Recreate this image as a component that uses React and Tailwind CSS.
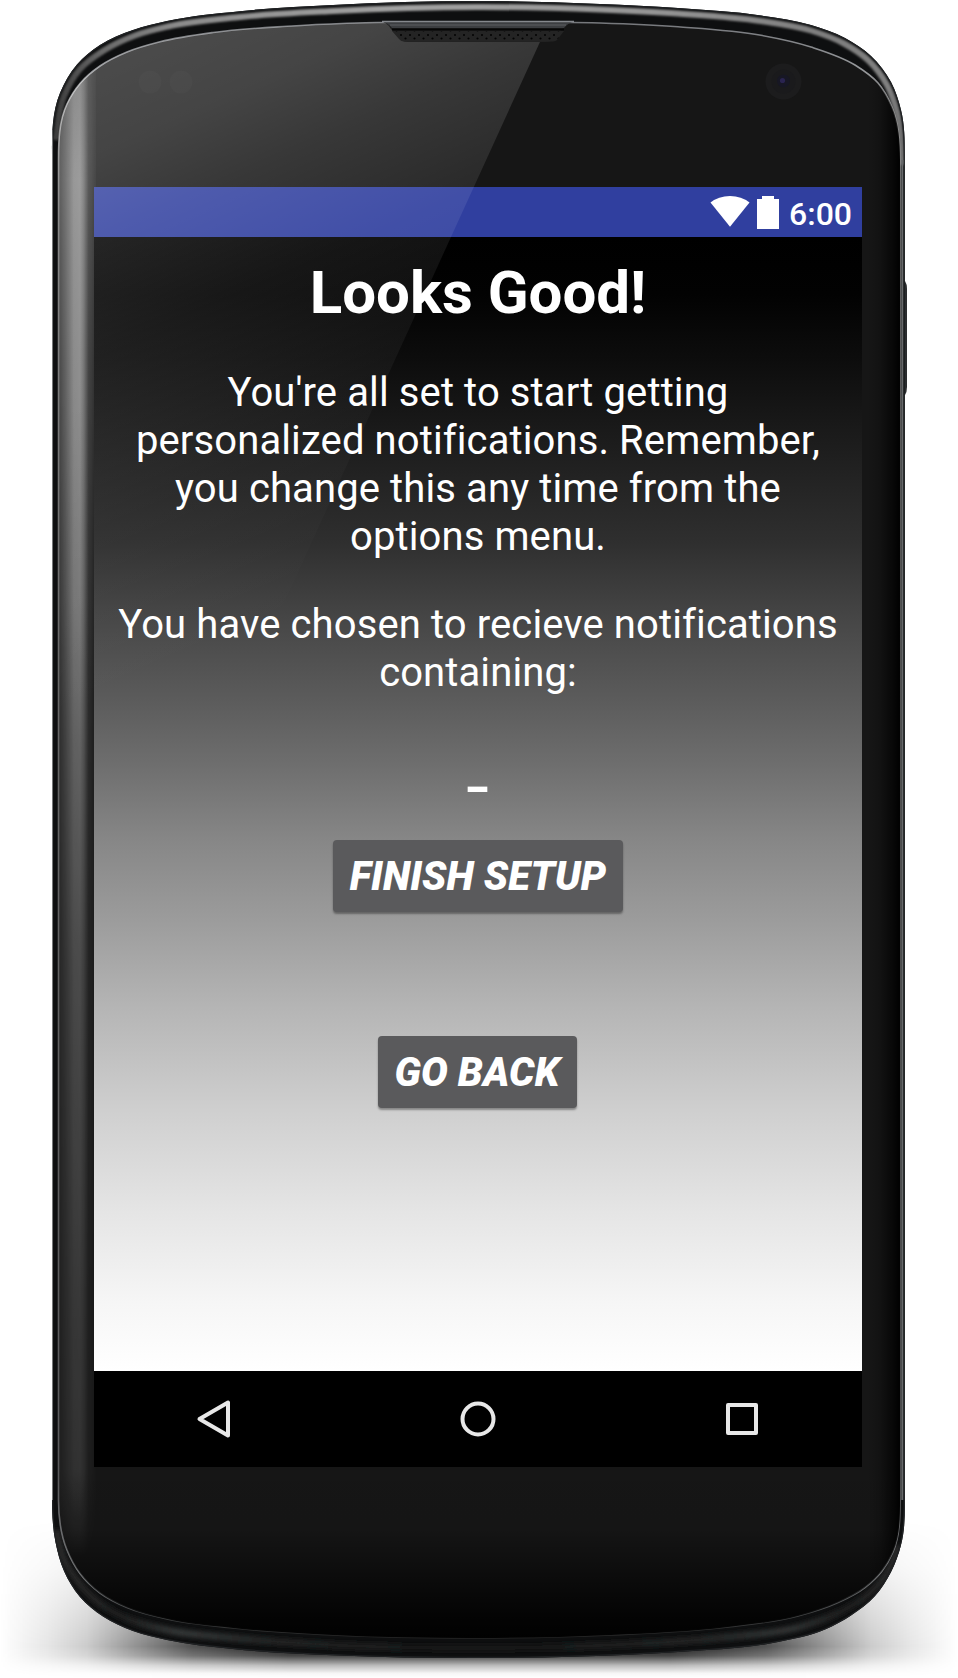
import React from "react";

/* Smooth cubic Béziers through a list of points; tangents allow for uneven spacing. */
function smooth(points, closed = true) {
  const n = points.length;
  const at = (i) => (closed ? points[(i + n) % n] : points[Math.max(0, Math.min(n - 1, i))]);
  const tangent = (i) => {
    const [a, b, c] = [at(i - 1), at(i), at(i + 1)];
    const l1 = Math.hypot(b[0] - a[0], b[1] - a[1]) || 1e6;
    const l2 = Math.hypot(c[0] - b[0], c[1] - b[1]) || 1e6;
    const tx = ((b[0] - a[0]) / l1) * l2 + ((c[0] - b[0]) / l2) * l1;
    const ty = ((b[1] - a[1]) / l1) * l2 + ((c[1] - b[1]) / l2) * l1;
    const l = Math.hypot(tx, ty) || 1;
    return Math.max(l1, l2) > 300 && Math.max(l1, l2) < 1e5 ? [0, Math.sign(ty)] : [tx / l, ty / l];
  };
  let d = `M${at(0)[0]} ${at(0)[1]}`;
  for (let i = 0; i < (closed ? n : n - 1); i++) {
    const [p, q] = [at(i), at(i + 1)];
    const h = Math.hypot(q[0] - p[0], q[1] - p[1]) / 3;
    const [t, u] = [tangent(i), tangent(i + 1)];
    const nums = [p[0] + t[0] * h, p[1] + t[1] * h, q[0] - u[0] * h, q[1] - u[1] * h];
    d += `C${nums.map((v) => v.toFixed(2)).join(" ")} ${q[0]} ${q[1]}`;
  }
  return closed ? d + "Z" : d;
}

const BODY = smooth([
  [52, 155], [60, 93], [77, 64.5], [100, 45], [133, 30], [167, 21], [240, 11.2], [333, 5], [478, 1],
  [600, 4], [678, 8], [761, 15.5], [811, 25], [845, 38], [871, 56], [891, 82], [901, 110], [904.8, 155],
  [904.8, 1490], [901, 1545], [891, 1572], [875, 1596], [851, 1615.5], [825, 1629.5], [778, 1642], [678, 1652],
  [580, 1656.5], [478, 1658], [333, 1655.3], [233, 1649], [167, 1640], [133, 1631], [103, 1616.5], [80, 1597], [64, 1571],
  [55.5, 1542], [52, 1490],
]);

const GLASS = smooth([
  [58.5, 160], [67, 104], [80, 83.5], [100, 66], [127, 52], [160, 41.8], [213, 32.5], [287, 26.2], [347, 23.2], [478, 22],
  [600, 23], [678, 26.8], [761, 35.3], [811, 47], [855, 65], [878, 83], [892, 107], [900, 160],
  [900, 1500], [893, 1552], [882, 1571], [865, 1587.5], [838, 1602.5], [798, 1616], [728, 1627], [611, 1635],
  [478, 1638], [333, 1635], [233, 1628], [167, 1619], [127, 1607.5], [100, 1593], [80, 1573.5], [67, 1550],
  [58.5, 1500],
]);

const TOP_RIM = smooth([
  [55.5, 140], [64, 96], [80, 69], [103, 51], [135, 35.5], [168, 26.5], [240, 17], [333, 11], [478, 7],
  [600, 9.5], [678, 13.5], [761, 21], [811, 30.5], [844, 43.5], [868, 60], [887, 85], [897, 112], [902.3, 165],
], false);

const LOW_RIM = smooth([
  [56, 1530], [63, 1557], [76, 1579], [98, 1602], [128, 1619], [167, 1630], [233, 1638], [333, 1645], [478, 1648],
  [611, 1645], [728, 1637], [800, 1627], [842, 1611], [870, 1593], [888, 1571], [898, 1545],
], false);

function Stops({ list }) {
  return list.map(([offset, color, opacity = 1]) => (
    <stop key={offset} offset={offset} stopColor={color} stopOpacity={opacity} />
  ));
}

function PhoneBody() {
  return (
    <svg className="absolute inset-0" width="958" height="1678" viewBox="0 0 958 1678" aria-hidden="true">
      <defs>
        <linearGradient id="shadowX" gradientUnits="userSpaceOnUse" x1="0" x2="958" y1="0" y2="0">
          <Stops list={[[0, "#000", 0], [0.05, "#000", 0.1], [0.09, "#000", 0.2], [0.14, "#000", 0.42], [0.2, "#000", 0.68], [0.3, "#000", 0.9], [0.7, "#000", 0.9], [0.8, "#000", 0.68], [0.86, "#000", 0.42], [0.91, "#000", 0.2], [0.95, "#000", 0.1], [1, "#000", 0]]} />
        </linearGradient>
        <linearGradient id="shadowY" gradientUnits="userSpaceOnUse" x1="0" x2="0" y1="1520" y2="1678">
          <Stops list={[[0, "#fff", 0], [0.3, "#fff", 0.25], [0.6, "#fff", 0.7], [0.8, "#fff", 1], [0.86, "#fff", 0.8], [0.92, "#fff", 0.3], [0.97, "#fff", 0.04], [1, "#fff", 0]]} />
        </linearGradient>
        <mask id="shadowMask" maskUnits="userSpaceOnUse" x="0" y="1500" width="958" height="178">
          <rect x="0" y="1500" width="958" height="178" fill="url(#shadowY)" />
        </mask>
        <linearGradient id="rim" gradientUnits="userSpaceOnUse" x1="52" x2="905" y1="0" y2="0">
          <Stops list={[[0, "#3a3a3a"], [0.06, "#6a6a6a"], [0.15, "#8c8c8c"], [0.4, "#a2a2a2"], [0.7, "#969696"], [0.9, "#7e7e7e"], [0.98, "#808080"], [1, "#6c6c6c"]]} />
        </linearGradient>
        <linearGradient id="lowRim" gradientUnits="userSpaceOnUse" x1="52" x2="905" y1="0" y2="0">
          <Stops list={[[0, "#2b2b2b"], [0.08, "#1c1d1d"], [0.15, "#343737"], [0.26, "#222424"], [0.5, "#131313"], [0.76, "#222424"], [0.86, "#313434"], [0.93, "#1c1d1d"], [1, "#2b2b2b"]]} />
        </linearGradient>
        <linearGradient id="edge" gradientUnits="userSpaceOnUse" x1="0" x2="0" y1="20" y2="1640">
          <Stops list={[[0, "#74767a"], [0.03, "#96989b"], [0.06, "#989898"], [0.12, "#757575"], [0.4, "#606060"], [0.9, "#58585a"], [0.96, "#7f8183"], [0.985, "#424445"], [1, "#222"]]} />
        </linearGradient>
        <linearGradient id="chin" gradientUnits="userSpaceOnUse" x1="0" x2="0" y1="1440" y2="1638">
          <Stops list={[[0, "#000", 0], [0.45, "#000", 0.05], [0.65, "#000", 0.4], [0.9, "#000", 0.85], [1, "#000", 0.95]]} />
        </linearGradient>
        <linearGradient id="rightFade" gradientUnits="userSpaceOnUse" x1="868" x2="900" y1="0" y2="0">
          <Stops list={[[0, "#000", 0], [0.4, "#000", 0.2], [0.85, "#000", 0.75], [1, "#000", 1]]} />
        </linearGradient>
        <linearGradient id="bevel" gradientUnits="userSpaceOnUse" x1="58" x2="96" y1="0" y2="0">
          <Stops list={[[0, "#fff", 0.12], [0.2, "#fff", 0.27], [0.42, "#fff", 0.46], [0.58, "#fff", 0.48], [0.68, "#fff", 0.36], [0.8, "#fff", 0.13], [1, "#fff", 0.03]]} />
        </linearGradient>
        <linearGradient id="bevelY" gradientUnits="userSpaceOnUse" x1="0" x2="0" y1="60" y2="1560">
          <Stops list={[[0, "#fff", 0.75], [0.08, "#fff", 1], [0.22, "#fff", 1], [0.36, "#fff", 0.88], [0.45, "#fff", 0.7], [0.6, "#fff", 0.48], [0.8, "#fff", 0.33], [0.94, "#fff", 0.25], [1, "#fff", 0]]} />
        </linearGradient>
        <mask id="bevelMask" maskUnits="userSpaceOnUse" x="50" y="40" width="60" height="1560">
          <rect x="50" y="40" width="60" height="1560" fill="url(#bevelY)" />
        </mask>
        <clipPath id="glassClip"><path d={GLASS} /></clipPath>
        <clipPath id="bodyClip"><path d={BODY} /></clipPath>
        <filter id="soft" filterUnits="userSpaceOnUse" x="0" y="0" width="958" height="1678"><feGaussianBlur stdDeviation="1.1" /></filter>
        <filter id="softer" filterUnits="userSpaceOnUse" x="0" y="1400" width="958" height="278"><feGaussianBlur stdDeviation="2.2" /></filter>
      </defs>

      <rect x="0" y="1500" width="958" height="178" fill="url(#shadowX)" mask="url(#shadowMask)" />
      <path d="M903 281h2q2 3 2 8v98q0 5-2 8h-2z" fill="#2a2c2e" />

      <path d={BODY} fill="#0e0f10" />
      <g clipPath="url(#bodyClip)">
        <path d={TOP_RIM} fill="none" stroke="url(#rim)" strokeWidth="6" filter="url(#soft)" />
        <path d={LOW_RIM} fill="none" stroke="url(#lowRim)" strokeWidth="7" filter="url(#softer)" />
        <path d={BODY} fill="none" stroke="#202224" strokeWidth="2.4" />
        <path d="M902.3 160V1500" stroke="#66686a" strokeWidth="2" />
        <path d="M52.500 130V1500" stroke="#77797a" strokeWidth="1" />
      </g>
      <path d={GLASS} fill="#161616" stroke="url(#edge)" strokeWidth="1.6" />
      <g clipPath="url(#glassClip)">
        <rect x="58" y="1440" width="842" height="200" fill="url(#chin)" />
        <rect x="868" y="20" width="34" height="1620" fill="url(#rightFade)" />
        <rect x="58" y="40" width="38" height="1560" fill="url(#bevel)" mask="url(#bevelMask)" />
        <circle cx="150" cy="82" r="11.5" fill="#fff" opacity="0.02" />
        <circle cx="181" cy="82" r="11.5" fill="#fff" opacity="0.02" />
      </g>
      <circle cx="783.5" cy="81.5" r="18" fill="#1c1c1d" />
      <circle cx="783.5" cy="81.5" r="12" fill="#1a1a1c" />
      <circle cx="783.5" cy="81" r="6.5" fill="#171724" />
      <circle cx="782.5" cy="80.5" r="2.6" fill="#2a2450" />
    </svg>
  );
}

/* Light reflection falling over the glass and the display, and the earpiece above it. */
function Glare() {
  return (
    <svg className="pointer-events-none absolute inset-0" width="958" height="1678" viewBox="0 0 958 1678" aria-hidden="true">
      <defs>
        <linearGradient id="glare" gradientUnits="userSpaceOnUse" x1="90" y1="60" x2="330" y2="600">
          <Stops list={[[0, "#fff", 0.23], [0.15, "#fff", 0.2], [0.28, "#fff", 0.145], [0.46, "#fff", 0.085], [0.73, "#fff", 0.03], [1, "#fff", 0]]} />
        </linearGradient>
        <pattern id="mesh" width="9" height="8" patternUnits="userSpaceOnUse" x="399" y="32">
          <rect width="9" height="8" fill="#242424" />
          <circle cx="2" cy="3" r="1.1" fill="#030303" />
          <circle cx="6.5" cy="6.5" r="1.1" fill="#030303" />
        </pattern>
      </defs>
      <path d="M58 20H550L200 787H58Z" fill="url(#glare)" clipPath="url(#glassClip)" />
      <path d="M380 21Q387 22 391 29L399 38Q402 42 408 42H546Q552 42 555 38L563 28Q567 22 574 21Z" fill="#1f1f1f" />
      <path d="M392 31H564L557 40Q555 41.500 550 41.500H404Q401 41.500 399 39Z" fill="url(#mesh)" />
      <path d="M383 22Q388 23 392 28H564Q568 23 573 22Z" fill="#3c3e41" />
      <path d="M382 21.500H574" stroke="#85888d" strokeWidth="1.6" />
      <path d="M390 25H566" stroke="#5c5e62" strokeWidth="1" />
      <path d="M392 29.500H564" stroke="#060606" strokeWidth="2" />
    </svg>
  );
}

function StatusBar() {
  return (
    <div className="flex h-[50px] items-start justify-end bg-[#303f9f] pr-[10px] text-white">
      <svg className="mt-[9px]" width="40" height="31" viewBox="0 0 40 31" fill="currentColor">
        <path d="M.5 6.6Q8.5 0 20 0T39.500 6.600L20 30.700Z" />
      </svg>
      <svg className="ml-[7px] mt-[9px]" width="22" height="33" viewBox="0 0 22 33" fill="currentColor">
        <path d="M5 0H17V3H22V33H0V3H5Z" />
      </svg>
      <span className="ml-[10px] mt-[8px] text-[32px] font-medium leading-[38px]">6:00</span>
    </div>
  );
}

function DialogButton({ children, className }) {
  return (
    <button
      type="button"
      className={`h-[72px] rounded-[4px] bg-[#5a5a5c] pt-px text-center text-[40px] font-black italic leading-[71px] tracking-[0.1px] text-white shadow-[0_2px_2px_rgba(0,0,0,0.35)] ${className}`}
    >
      {children}
    </button>
  );
}

function NavBar() {
  return (
    <div className="flex h-24 items-center justify-between bg-black px-[94px]">
      <svg width="52" height="52" viewBox="0 0 52 52" fill="none" stroke="#e8e8e8" strokeWidth="4" strokeLinejoin="round">
        <path d="M11.500 26L40 9.500V42.500Z" />
      </svg>
      <svg width="52" height="52" viewBox="0 0 52 52" fill="none" stroke="#e8e8e8" strokeWidth="4">
        <circle cx="26" cy="26" r="15.500" />
      </svg>
      <svg width="52" height="52" viewBox="0 0 52 52" fill="none" stroke="#e8e8e8" strokeWidth="4" strokeLinejoin="round">
        <rect x="12" y="12" width="28" height="28" />
      </svg>
    </div>
  );
}

export default function App() {
  return (
    <div className="relative h-[1678px] w-[958px] overflow-hidden bg-white font-['Roboto',sans-serif] [font-variant-ligatures:none]">
      <PhoneBody />
      <div className="relative px-[94px] pt-[187px]">
        <div className="flex h-[1280px] w-[768px] flex-col">
          <StatusBar />
          <main className="flex flex-1 flex-col items-center bg-[linear-gradient(to_bottom,#000_0%,#020202_5%,#0d0d0d_11%,#1c1c1c_18%,#2f2f2f_27%,#474747_34%,#5c5c5c_41%,#6e6e6e_46.500%,#868686_53%,#9b9b9b_60%,#b5b5b5_68%,#cfcfcf_77%,#e5e5e5_86%,#f6f6f6_94%,#fff_100%)] text-center text-[40px] leading-[48px] tracking-[0.11px] text-white">
            <h1 className="mt-[21px] text-[60px] font-bold leading-[70px] tracking-normal">Looks Good!</h1>
            <p className="mt-[41px]">
              You&apos;re all set to start getting<br />
              personalized notifications. Remember,<br />
              you change this any time from the<br />
              options menu.
            </p>
            <p className="mt-[40px]">
              You have chosen to recieve notifications<br />
              containing:
            </p>
            <p className="mt-[56px] h-[70px] origin-center scale-x-[1.18] scale-y-[0.8] text-[60px] font-bold leading-[70px]">-</p>
            <DialogButton className="mt-[17px] w-[290px]">FINISH SETUP</DialogButton>
            <DialogButton className="mr-[2px] mt-[124px] w-[199px]">GO BACK</DialogButton>
          </main>
          <NavBar />
        </div>
      </div>
      <Glare />
    </div>
  );
}
